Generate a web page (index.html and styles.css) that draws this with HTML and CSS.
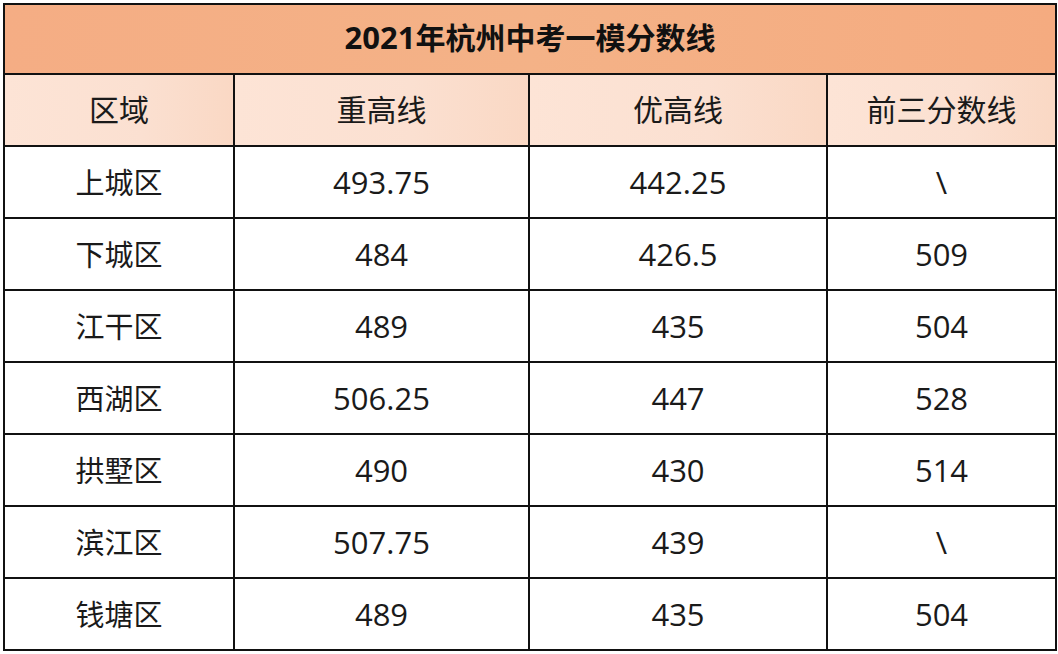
FILE: index.html
```html
<!DOCTYPE html>
<html lang="zh">
<head>
<meta charset="utf-8">
<link rel="stylesheet" href="styles.css">
</head>
<body>
<table class="score">
  <colgroup>
    <col class="c1"><col class="c2"><col class="c3"><col class="c4">
  </colgroup>
  <tr class="title"><td colspan="4"><span class="num">2021</span>年杭州中考一模分数线</td></tr>
  <tr class="head"><td>区域</td><td>重高线</td><td>优高线</td><td>前三分数线</td></tr>
  <tr><td>上城区</td><td class="num">493.75</td><td class="num">442.25</td><td class="num">\</td></tr>
  <tr><td>下城区</td><td class="num">484</td><td class="num">426.5</td><td class="num">509</td></tr>
  <tr><td>江干区</td><td class="num">489</td><td class="num">435</td><td class="num">504</td></tr>
  <tr><td>西湖区</td><td class="num">506.25</td><td class="num">447</td><td class="num">528</td></tr>
  <tr><td>拱墅区</td><td class="num">490</td><td class="num">430</td><td class="num">514</td></tr>
  <tr><td>滨江区</td><td class="num">507.75</td><td class="num">439</td><td class="num">\</td></tr>
  <tr><td>钱塘区</td><td class="num">489</td><td class="num">435</td><td class="num">504</td></tr>
</table>
</body>
</html>
```
FILE: styles.css
```css
html, body {
  margin: 0;
  padding: 0;
  background: #ffffff;
}
body {
  padding: 3px 0 0 3px;
  font-family: "Open Sans", "Noto Sans CJK SC", sans-serif;
  color: #1a1a1a;
}
.score {
  border-collapse: collapse;
  table-layout: fixed;
  width: 1052px;
}
.c1 { width: 230px; }
.c2 { width: 295px; }
.c3 { width: 298px; }
.c4 { width: 229px; }
.score td {
  border: 2px solid #111111;
  height: 70px;
  padding: 0;
  text-align: center;
  vertical-align: middle;
  font-size: 29px;
  line-height: 1;
}
.score td.num {
  font-size: 31px;
}
.title td {
  background: linear-gradient(90deg, #f5ad84 0%, #f4b287 50%, #f5ab80 100%);
  font-weight: 700;
  font-size: 30px;
  color: #111111;
  height: 65px;
  padding-bottom: 3px;
}
.title .num {
  font-size: 31px;
}
.head td {
  background: linear-gradient(90deg, #fde4d6 0%, #fbe0d1 60%, #fad8c4 100%);
  font-size: 30px;
  height: 70px;
}
```
